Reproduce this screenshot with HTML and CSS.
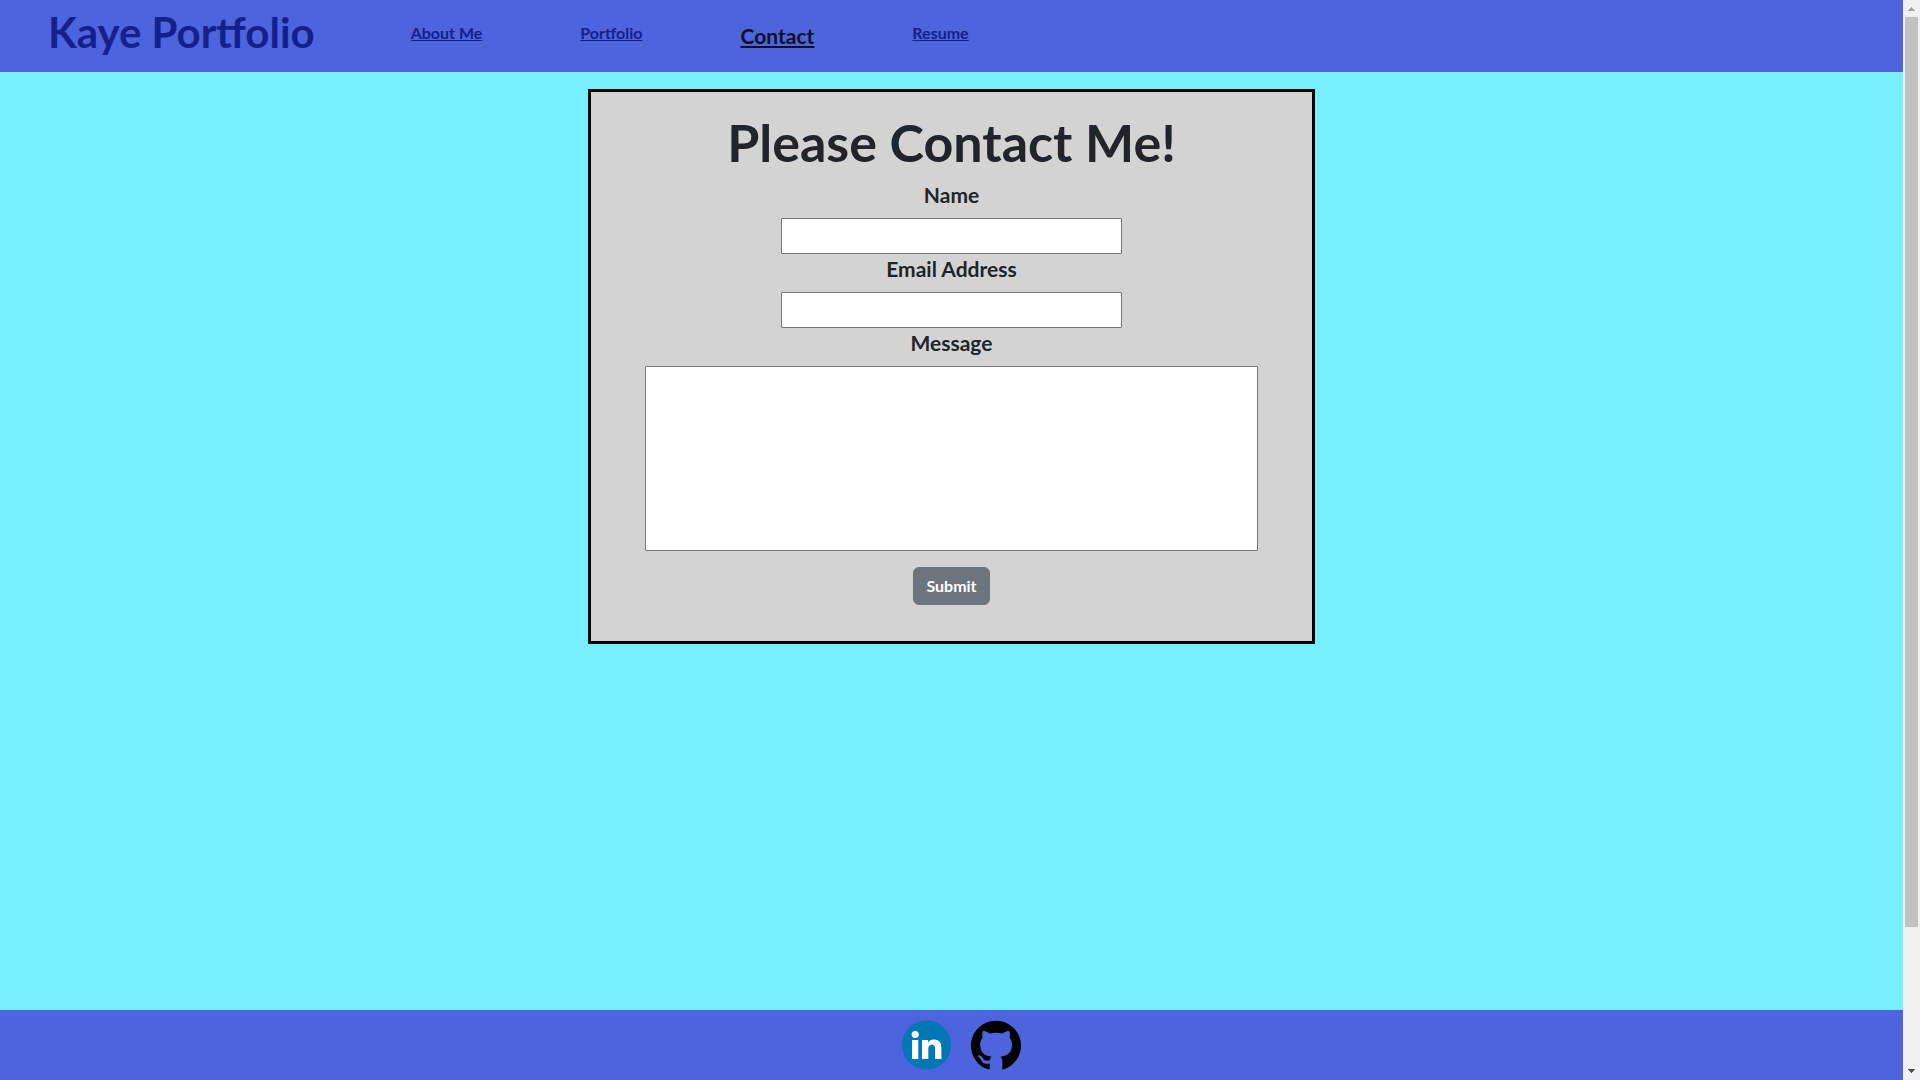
FILE: index.html
```html
<!DOCTYPE html>
<html lang="en">
<head>
<meta charset="utf-8">
<title>Kaye Portfolio</title>
<link rel="stylesheet" href="styles.css">
</head>
<body>
<div class="page">
  <header class="header">
    <h1 class="brand">Kaye Portfolio</h1>
    <nav class="nav">
      <a class="nav-link" href="#about">About Me</a>
      <a class="nav-link" href="#portfolio">Portfolio</a>
      <a class="nav-link active" href="#contact">Contact</a>
      <a class="nav-link" href="#resume">Resume</a>
    </nav>
  </header>
  <main class="main">
    <form class="card">
      <h2 class="title">Please Contact Me!</h2>
      <label class="label" for="name">Name</label>
      <input class="field" id="name" type="text">
      <label class="label" for="email">Email Address</label>
      <input class="field" id="email" type="email">
      <label class="label" for="message">Message</label>
      <textarea class="field message" id="message"></textarea>
      <button class="submit" type="submit">Submit</button>
    </form>
  </main>
  <footer class="footer">
    <a class="social" href="#linkedin" aria-label="LinkedIn">
      <svg class="icon" viewBox="0 0 50 50">
        <circle cx="24.500" cy="25" r="24.500" fill="#0077b5"/>
        <circle cx="13.200" cy="14.500" r="3.600" fill="#fff"/>
        <path fill="#fff" d="M10 20h6.300v19H10zM20 20h6v2.600c1-1.800 3.100-3.100 6-3.100 5.700 0 7.400 3.600 7.400 8.900V39h-6.300v-9.400c0-2.700-.4-4.900-3.200-4.900-2.900 0-3.600 2.300-3.600 4.800V39H20z"/>
      </svg>
    </a>
    <a class="social" href="#github" aria-label="GitHub">
      <svg class="icon" viewBox="0 0 16 16">
        <path transform="translate(0 .2)" d="M8 0C3.580 0 0 3.580 0 8c0 3.540 2.290 6.530 5.470 7.590.2.040.55.04.55-.09v-1.780c-2.010.37-2.530-.49-2.690-.94-.09-.23-.48-.94-.82-1.130-.28-.15-.68-.52-.01-.53.63-.01 1.080.58 1.230.82.72 1.210 1.870.87 2.330.66.07-.52.28-.87.51-1.070-1.780-.2-3.640-.89-3.640-3.950 0-.87.31-1.590.82-2.150-.08-.2-.36-1.020.08-2.120 0 0 .67-.21 2.200.82.64-.18 1.320-.27 2-.27s1.360.09 2 .27c1.530-1.040 2.200-.82 2.200-.82.44 1.100.16 1.920.08 2.120.51.56.82 1.270.82 2.150 0 3.070-1.870 3.750-3.650 3.950.29.25.54.73.54 1.480v2.490c0 .13.25.15.45.09A8.010 8.010 0 0 0 16 8c0-4.420-3.580-8-8-8z"/>
      </svg>
    </a>
  </footer>
</div>
<div class="scrollbar" aria-hidden="true">
  <svg class="arrow" viewBox="0 0 17 17"><path fill="#a3a3a3" d="M8 7h1v1h1v1h1v1h1v1H5v-1h1V9h1V8h1z"/></svg>
  <div class="track"><div class="thumb"></div></div>
  <svg class="arrow" viewBox="0 0 17 17"><path fill="#505050" d="M5 6h7v1h-1v1h-1v1H9v1H8V9H7V8H6V7H5z"/></svg>
</div>
</body>
</html>
```
FILE: styles.css
```css
* { box-sizing: border-box; }

body {
  margin: 0;
  min-height: 100vh;
  display: flex;
  font-family: Lato, "Liberation Sans", sans-serif;
  font-weight: 700;
  color: #212529;
  background: #78efff;
}

.page {
  flex: 1;
  display: flex;
  flex-direction: column;
}

.header {
  display: flex;
  align-items: flex-start;
  gap: 96px;
  padding: 8px 48px 16px;
  background: #4d64dc;
  color: #14208c;
}

.brand {
  margin: 0;
  font-size: 42px;
  line-height: 48px;
  white-space: nowrap;
}

.nav {
  display: flex;
  align-items: flex-start;
  gap: 98px;
  padding-top: 13px;
}

.nav-link {
  color: inherit;
  font-size: 16px;
  line-height: 24px;
  white-space: nowrap;
}

.nav-link.active {
  color: #0d1226;
  font-size: 21px;
  line-height: 30px;
}

.main {
  flex: 1;
  padding: 17px 0;
}

.card {
  display: flex;
  flex-direction: column;
  align-items: center;
  width: 38.2%;
  min-width: 400px;
  margin: 0 auto;
  padding: 20px 54px 36px;
  border: 3px solid #000;
  background: #d3d3d3;
}

.title {
  margin: 0 0 8px;
  font-size: 52px;
  line-height: 60px;
}

.label {
  margin-bottom: 8px;
  font-size: 21px;
  line-height: 30px;
}

.field {
  width: 341px;
  max-width: 100%;
  height: 36px;
  padding: 2px 4px;
  border: 1px solid #767676;
  border-radius: 1px;
  background: #fff;
  font: inherit;
}

.message {
  width: 100%;
  height: 185px;
  resize: none;
}

.submit {
  margin-top: 16px;
  padding: 6px 12px;
  border: 1px solid #6c757d;
  border-radius: 6px;
  background: #6c757d;
  color: #fff;
  font: inherit;
  font-size: 16px;
  line-height: 24px;
}

.footer {
  display: flex;
  justify-content: center;
  gap: 19px;
  padding: 10px 0 10px 20px;
  background: #4d64dc;
}

.social,
.icon {
  display: block;
  width: 50px;
  height: 50px;
}

.scrollbar {
  display: flex;
  flex-direction: column;
  width: 17px;
  background: #f1f1f1;
}

.arrow {
  display: block;
  width: 17px;
  height: 17px;
}

.track {
  flex: 1;
  padding: 0 2px;
}

.thumb {
  height: 87%;
  background: #c1c1c1;
}
```
